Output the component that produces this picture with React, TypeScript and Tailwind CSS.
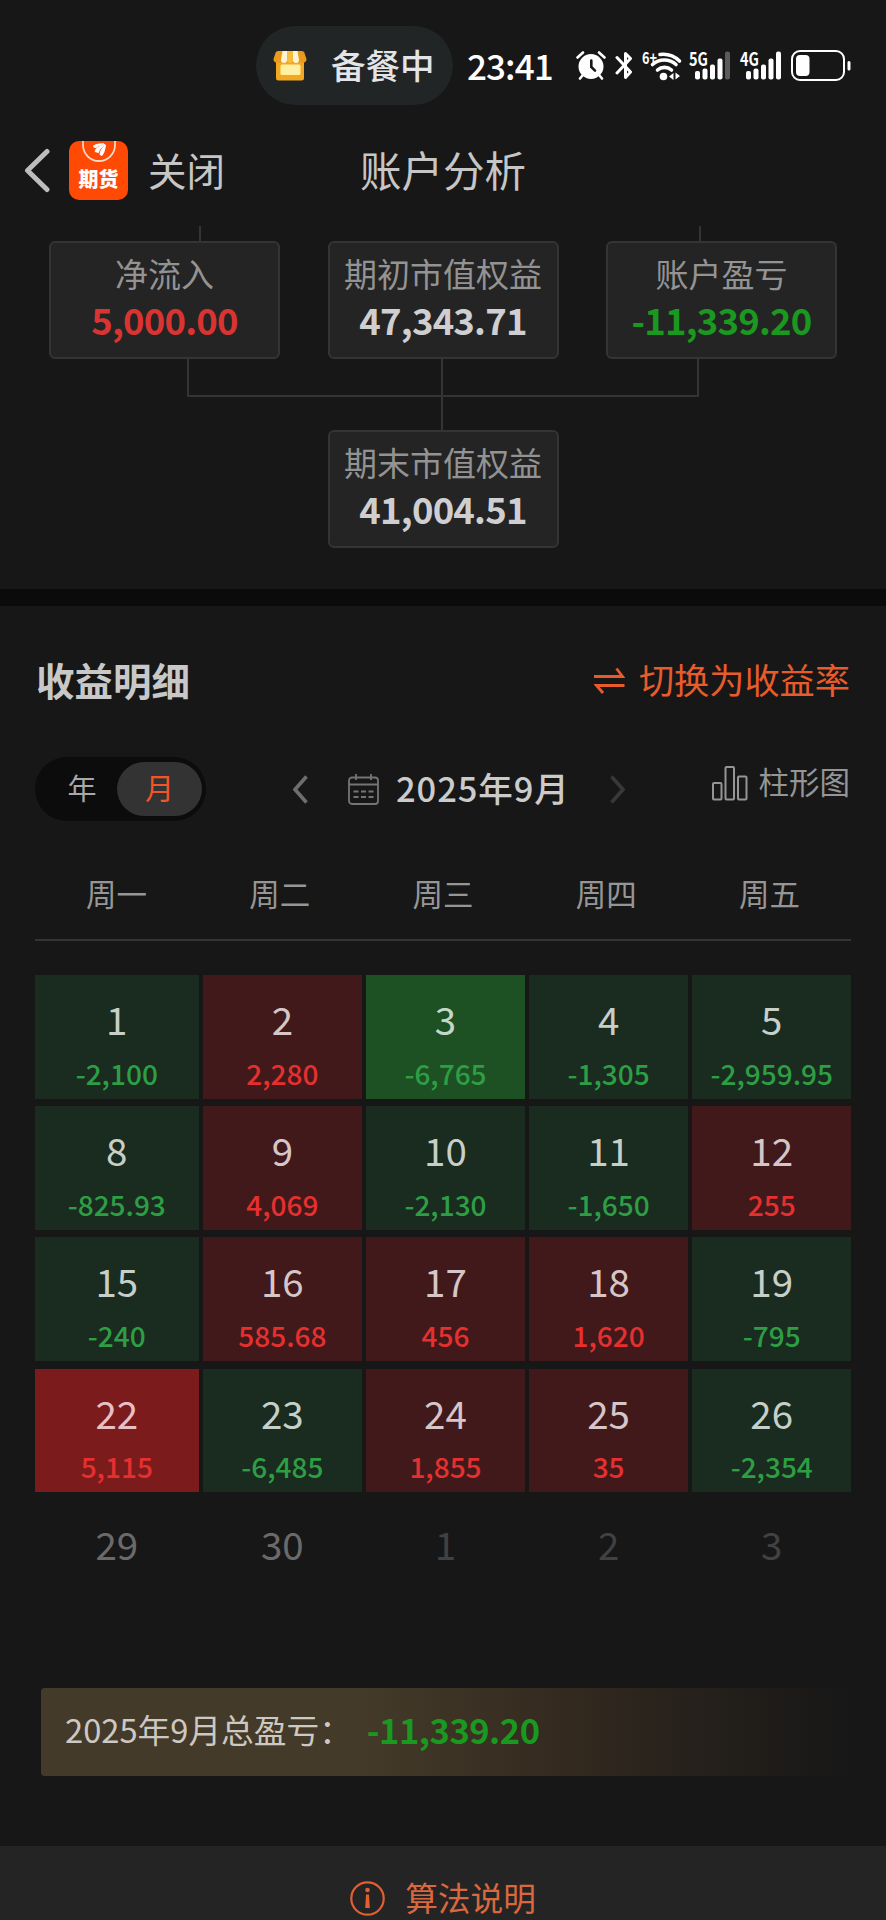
import type { ReactNode } from "react";
import clsx from "clsx";

type Day = { day: number; amount?: string; tone?: "up" | "down" | "upStrong" | "downStrong" | "idle" | "next" };

const weekdays = ["周一", "周二", "周三", "周四", "周五"];

const days: Day[] = [
  { day: 1, amount: "-2,100", tone: "down" },
  { day: 2, amount: "2,280", tone: "up" },
  { day: 3, amount: "-6,765", tone: "downStrong" },
  { day: 4, amount: "-1,305", tone: "down" },
  { day: 5, amount: "-2,959.95", tone: "down" },
  { day: 8, amount: "-825.93", tone: "down" },
  { day: 9, amount: "4,069", tone: "up" },
  { day: 10, amount: "-2,130", tone: "down" },
  { day: 11, amount: "-1,650", tone: "down" },
  { day: 12, amount: "255", tone: "up" },
  { day: 15, amount: "-240", tone: "down" },
  { day: 16, amount: "585.68", tone: "up" },
  { day: 17, amount: "456", tone: "up" },
  { day: 18, amount: "1,620", tone: "up" },
  { day: 19, amount: "-795", tone: "down" },
  { day: 22, amount: "5,115", tone: "upStrong" },
  { day: 23, amount: "-6,485", tone: "down" },
  { day: 24, amount: "1,855", tone: "up" },
  { day: 25, amount: "35", tone: "up" },
  { day: 26, amount: "-2,354", tone: "down" },
  { day: 29, tone: "idle" },
  { day: 30, tone: "idle" },
  { day: 1, tone: "next" },
  { day: 2, tone: "next" },
  { day: 3, tone: "next" },
];

const cellTone = {
  up: "bg-[#41191a] text-[#d6c6c8]",
  down: "bg-[#1a2b1f] text-[#c6cfc8]",
  upStrong: "bg-[#7b1b1c] text-[#e8c0c4]",
  downStrong: "bg-[#1d5023] text-[#c4d6c6]",
  idle: "text-[#6a6a6a]",
  next: "text-[#414141]",
};

const amountTone = {
  up: "text-[#e5302f]",
  down: "text-[#2e9e45]",
  upStrong: "text-[#e5302f]",
  downStrong: "text-[#2e9e45]",
  idle: "",
  next: "",
};

function StoreIcon() {
  return (
    <svg width="34" height="30" viewBox="0 0 34 30">
      <path d="M3 10h28v17a2.500 2.500 0 0 1-2.500 2.500h-23A2.500 2.500 0 0 1 3 27z" fill="#f3a91f" />
      <path d="M5 0h24a2.500 2.500 0 0 1 2.300 1.600L33.500 8c0 2.500-1.500 3.800-3.500 3.800H4C2 11.800.5 10.500.5 8l2.200-6.400A2.500 2.500 0 0 1 5 0z" fill="#ea9a1c" />
      <path d="M9.500 0h5l-.5 9a2.800 2.800 0 0 1-6 0z" fill="#fff3d2" />
      <path d="M19.500 0h5L26 9a2.800 2.800 0 0 1-6 0z" fill="#fff3d2" />
      <path d="M14.500 0h5L20 9a3 3 0 0 1-6 0z" fill="#f8bb3b" />
      <rect x="7.500" y="13.500" width="20" height="10.500" rx="1.500" fill="#fff0a4" />
    </svg>
  );
}

function AlarmIcon() {
  return (
    <svg width="30" height="29" viewBox="0 0 30 29">
      <circle cx="15" cy="15.500" r="12.500" fill="#fff" />
      <path d="M1.500 6.500 7 1.500M28.500 6.500 23 1.500M6.500 24.500 4 27.500M23.500 24.500l2.500 3" stroke="#fff" strokeWidth="2.600" strokeLinecap="round" />
      <path d="M15.300 9.500v6.500l3.700 3.700" fill="none" stroke="#171717" strokeWidth="2.600" strokeLinecap="round" />
    </svg>
  );
}

function BluetoothIcon() {
  return (
    <svg width="18" height="29" viewBox="0 0 18 29" fill="none" stroke="#fff" strokeWidth="3" strokeLinejoin="round" strokeLinecap="round">
      <path d="M2 6.500 15.500 21 10.500 26.500v-24l5 5L2 22" />
    </svg>
  );
}

function WifiIcon() {
  return (
    <svg width="40" height="30" viewBox="0 0 40 30" fill="none" stroke="#fff" strokeLinecap="round" className="overflow-visible">
      <text x="0" y="13" fontSize="16.500" fontWeight="700" fill="#fff" stroke="none" textLength="15" lengthAdjust="spacingAndGlyphs">
        6+
      </text>
      <path d="M18 3.500A24 24 0 0 1 37.500 10" strokeWidth="3.600" />
      <path d="M10.500 13.500a17.500 17.500 0 0 1 23.500 0" strokeWidth="3.600" />
      <path d="M15.500 19a10.500 10.500 0 0 1 14 0" strokeWidth="3.600" />
      <circle cx="21.500" cy="25.500" r="3.800" fill="#fff" stroke="none" />
      <path d="M31.500 22v7l-4.500-3.500zM33.500 21.500v7l4.500-3.500z" fill="#fff" stroke="none" />
    </svg>
  );
}

function SignalIcon({ label, weak }: { label: string; weak?: boolean }) {
  return (
    <svg width="42" height="29" viewBox="0 0 42 29" fill="#fff" className="overflow-visible">
      <text x="0" y="14.500" fontSize="18.500" fontWeight="700" textLength="19" lengthAdjust="spacingAndGlyphs">
        {label}
      </text>
      <rect x="6" y="20" width="5" height="8.500" rx="2" />
      <rect x="13.500" y="17.500" width="5" height="11" rx="2" />
      <rect x="21" y="13.500" width="5" height="15" rx="2" />
      <rect x="28.500" y="7.500" width="5" height="21" rx="2" />
      <rect x="36" y="0.500" width="5" height="28" rx="2" fill={weak ? "#5b5b5b" : "#fff"} />
    </svg>
  );
}

function BatteryIcon() {
  return (
    <svg width="60" height="31" viewBox="0 0 60 31">
      <rect x="1" y="1" width="52" height="29" rx="8" fill="none" stroke="#fff" strokeWidth="2" />
      <rect x="5" y="5" width="13.500" height="21" rx="4" fill="#fff" />
      <rect x="56.500" y="11" width="3" height="9.500" rx="1.500" fill="#fff" />
    </svg>
  );
}

function FuturesLogo() {
  return (
    <span className="flex h-[59px] w-[59px] flex-col items-center overflow-hidden rounded-[10px] bg-[#ff4a05]">
      <svg width="34" height="22" viewBox="0 0 34 22" className="shrink-0">
        <path d="M1 0v4a16 16 0 0 0 32 0V0" fill="none" stroke="#ffd9c8" strokeWidth="1.800" />
        <path d="M11 5.500c2-2 6-3 11-2.500-4 .8-7 1.800-8 3.800zM13 10.500c1-3.500 4.500-6 10-7-3.500 2.500-6 5-6.500 8zM18 13.500c.3-3.500 2-7 5.500-9.500-.5 3.500-1 7-3.500 10.500z" fill="#fff" stroke="#fff" />
      </svg>
      <span className="mt-[6px] text-[20px] font-black leading-[20px] text-white">期货</span>
    </span>
  );
}

function BackIcon() {
  return (
    <svg width="26" height="45" viewBox="0 0 26 45" fill="none" stroke="#bdbdbd" strokeWidth="5" strokeLinecap="round" strokeLinejoin="round">
      <path d="M23 3.500 3.500 22.500 23 41.500" />
    </svg>
  );
}

function Chevron({ className, flip }: { className: string; flip?: boolean }) {
  return (
    <svg viewBox="0 0 15 29" className={className} fill="none" stroke="currentColor" strokeWidth="3.600">
      <path d={flip ? "M1.500 1.500 13 14.500 1.500 27.500" : "M13.500 1.500 2 14.500 13.500 27.500"} />
    </svg>
  );
}

function CalendarIcon() {
  return (
    <svg width="31" height="31" viewBox="0 0 31 31" fill="none" stroke="#747474" strokeWidth="1.800">
      <rect x="1" y="3.500" width="29" height="26.500" rx="3" />
      <path d="M1 10.500h29M8 0v6M23 0v6" />
      <path d="M5.500 17.500h5M13 17.500h5M20.500 17.500h5M5.500 23h5M13 23h5M20.500 23h5" />
    </svg>
  );
}

function ChartIcon() {
  return (
    <svg width="36" height="35" viewBox="0 0 36 35" fill="none" stroke="#959595" strokeWidth="2">
      <rect x="1" y="17" width="8.500" height="16.500" rx="1" />
      <rect x="13.500" y="1" width="8.500" height="32.500" rx="1" />
      <rect x="26" y="10.500" width="8.500" height="23" rx="1" />
    </svg>
  );
}

function SwapIcon() {
  return (
    <svg width="31" height="27" viewBox="0 0 31 27" fill="none" stroke="#e85c2b" strokeWidth="2.800">
      <path d="M0 9.500h28.500L22.500 1.500M30.500 18.500H2.500L9 26" />
    </svg>
  );
}

function InfoIcon() {
  return (
    <svg width="35" height="35" viewBox="0 0 35 35">
      <circle cx="17.500" cy="17.500" r="16.200" fill="none" stroke="#e0602f" strokeWidth="2.200" />
      <circle cx="17.500" cy="9" r="2.300" fill="#e0602f" />
      <path d="M16 13.500h3l.8 13.500h-4.600z" fill="#e0602f" />
    </svg>
  );
}

function AccountBox({ label, children, tone = "text-[#cfcfd2]" }: { label: string; children: ReactNode; tone?: string }) {
  return (
    <div className="flex h-[118px] w-[231px] flex-col items-center rounded-[6px] border-2 border-[#343434] bg-[#242424] pt-[12px]">
      <span className="text-[33px] leading-[36px] text-[#939393]">{label}</span>
      <span className={clsx("mt-[10px] text-[36.500px] font-bold leading-[38px] tracking-[-0.8px]", tone)}>{children}</span>
    </div>
  );
}

function DayCell({ day, amount, tone = "idle" }: Day) {
  return (
    <div className={clsx("flex flex-col items-center pt-[23px]", cellTone[tone])}>
      <span className="text-[38.500px] leading-[40px]">{day}</span>
      {amount && (
        <span className={clsx("mt-[19.500px] text-[28px] font-medium leading-[30px]", amountTone[tone])}>{amount}</span>
      )}
    </div>
  );
}

export default function App() {
  return (
    <div className="flex h-[1920px] w-[886px] flex-col overflow-hidden whitespace-nowrap bg-[#171717] font-['Noto_Sans_CJK_SC',sans-serif]">
      <div className="flex h-[131px] items-center pl-[256px]">
        <div className="flex h-[79px] w-[197px] items-center rounded-full bg-[#222525] pl-[17px]">
          <StoreIcon />
          <span className="-mt-[3px] ml-[24px] text-[34.500px] font-medium leading-[36px] text-[#e2e4e8]">备餐中</span>
        </div>
        <span className="-mt-[2px] ml-[14px] w-[84px] text-[35px] font-medium leading-[36px] tracking-[-0.9px] text-white">23:41</span>
        <div className="ml-[25px] flex items-center">
          <AlarmIcon />
          <span className="ml-[9px]"><BluetoothIcon /></span>
          <span className="ml-[9px]"><WifiIcon /></span>
          <span className="ml-[7px]"><SignalIcon label="5G" weak /></span>
          <span className="ml-[9px]"><SignalIcon label="4G" /></span>
          <span className="ml-[9px]"><BatteryIcon /></span>
        </div>
      </div>

      <header className="flex h-[95px] items-center pb-[16px] pl-[24px]">
        <BackIcon />
        <span className="ml-[19px]"><FuturesLogo /></span>
        <span className="-mt-[3px] ml-[20px] text-[38.500px] leading-[44px] text-[#c6c6c6]">关闭</span>
        <h1 className="-mt-[3px] ml-[135px] text-[41.500px] leading-[44px] text-[#c6c6c6]">账户分析</h1>
      </header>

      <section className="h-[363px] px-[49px]">
        <div className="flex h-[15px] justify-between pl-[150px] pr-[136px]">
          <i className="w-[2px] bg-[#343434]" />
          <i className="w-[2px] bg-[#343434]" />
        </div>
        <div className="flex justify-between">
          <AccountBox label="净流入" tone="text-[#d93432]">5,000.00</AccountBox>
          <AccountBox label="期初市值权益">47,343.71</AccountBox>
          <AccountBox label="账户盈亏" tone="text-[#1b981f]">-11,339.20</AccountBox>
        </div>
        <div className="ml-[138px] h-[38px] w-[512px] border-2 border-t-0 border-[#343434]">
          <div className="ml-[252px] h-[71px] w-[2px] bg-[#343434]" />
        </div>
        <div className="mt-[33px] flex justify-center">
          <AccountBox label="期末市值权益">41,004.51</AccountBox>
        </div>
      </section>
      <div className="h-[17px] shrink-0 bg-[#0b0b0b]" />

      <section className="flex flex-col px-[35px]">
        <div className="mt-[50px] flex h-[46px] items-center justify-between pl-[1px] pr-px">
          <h2 className="text-[38.500px] font-bold leading-[44px] text-[#c8c8c8]">收益明细</h2>
          <div className="flex items-center text-[35.200px] leading-[40px] text-[#e85c2b]">
            <span className="mt-[2px]"><SwapIcon /></span>
            <span className="ml-[14px]">切换为收益率</span>
          </div>
        </div>

        <div className="mt-[55px] flex h-[64px] items-center">
          <div className="flex h-[64px] w-[171px] items-center rounded-full bg-[#0c0c0c] pr-[4px] text-[29px] leading-[32px]">
            <span className="w-[82px] pb-[4px] pl-[12px] text-center text-[#a8a8a8]">年</span>
            <span className="flex h-[54px] w-[85px] items-center justify-center rounded-full bg-[#333] pb-[4px] text-[#f0562a]">月</span>
          </div>
          <Chevron className="ml-[87px] h-[29px] w-[15px] text-[#6e6e6e]" />
          <span className="ml-[40px]"><CalendarIcon /></span>
          <span className="-mt-[5px] ml-[17px] w-[172px] text-[34.500px] font-medium leading-[40px] tracking-[0.9px] text-[#cbcbcb]">2025年9月</span>
          <Chevron className="ml-[42px] h-[29px] w-[15px] text-[#383838]" flip />
          <div className="ml-auto flex items-center pb-[12px] pr-px">
            <ChartIcon />
            <span className="-mt-[4px] ml-[11px] text-[30.500px] leading-[34px] text-[#959595]">柱形图</span>
          </div>
        </div>

        <div className="mt-[52px] grid h-[68px] grid-cols-5 border-b-2 border-[#343434] text-center text-[30.500px] leading-[40px] text-[#969696]">
          {weekdays.map((name) => (
            <span key={name}>{name}</span>
          ))}
        </div>

        <div className="mt-[34px] grid auto-rows-[123.700px] grid-cols-[163.500px_repeat(4,1fr)] gap-x-[4.600px] gap-y-[7.500px]">
          {days.map((item, index) => (
            <DayCell key={index} {...item} />
          ))}
        </div>

        <div className="ml-[6px] mt-[65px] flex h-[88px] items-center rounded-[4px] bg-linear-to-r from-[#433a29] from-40% via-[#33291f] via-65% to-[#171717] pb-[6px] pl-[24px]">
          <span className="text-[32.700px] leading-[40px] text-[#cdc8c2]">2025年9月总盈亏：</span>
          <span className="ml-[15px] text-[34.500px] font-bold leading-[40px] tracking-[-0.5px] text-[#1b981f]">-11,339.20</span>
        </div>
      </section>

      <footer className="mt-auto flex h-[74px] shrink-0 items-center justify-center bg-[#242424] pt-[30px]">
        <InfoIcon />
        <span className="-mt-[3px] ml-[20px] text-[32.700px] leading-[40px] text-[#d9683f]">算法说明</span>
      </footer>
    </div>
  );
}
